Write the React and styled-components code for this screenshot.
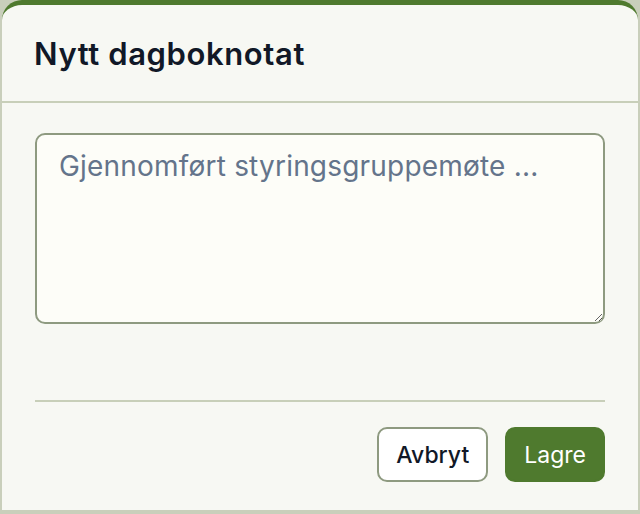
import React from "react";
import styled, { createGlobalStyle } from "styled-components";

const GlobalStyle = createGlobalStyle`
  html, body {
    margin: 0;
    padding: 0;
    background: #c9cfbb;
    font-family: Inter, "Noto Sans", sans-serif;
  }
`;

const Dialog = styled.div`
  box-sizing: border-box;
  width: 636px;
  height: 510px;
  margin-left: 2px;
  background: #f7f8f3;
  border-top: 5px solid #4f7a2e;
  border-radius: 20px 20px 0 0;
  display: flex;
  flex-direction: column;
  overflow: hidden;
`;

const Header = styled.div`
  height: 98px;
  box-sizing: border-box;
  padding: 0 32px 0;
  display: flex;
  align-items: center;
  border-bottom: 2px solid #c8cfb9;
`;

const Title = styled.h2`
  margin: 0;
  font-size: 31px;
  font-weight: 600;
  color: #111827;
  letter-spacing: 0.6px;
`;

const Body = styled.div`
  padding: 30px 33px 0;
  display: flex;
  flex-direction: column;
`;

const Note = styled.textarea`
  box-sizing: border-box;
  width: 100%;
  height: 191px;
  border: 2px solid #8e9a80;
  border-radius: 10px;
  background: #fdfdf8;
  padding: 10px 22px;
  font-family: inherit;
  font-size: 28px;
  line-height: 1.5;
  letter-spacing: 0.2px;
  color: #111827;
  resize: vertical;
  outline: none;

  &::placeholder {
    color: #64748b;
  }
`;

const Footer = styled.div`
  margin: 76px 33px 0;
  padding-top: 25px;
  border-top: 2px solid #c8cfb9;
  display: flex;
  justify-content: flex-end;
  gap: 17px;
`;

const Button = styled.button`
  box-sizing: border-box;
  height: 55px;
  padding: 0 17px;
  border-radius: 10px;
  border: 2px solid ${(p) => (p.$primary ? "#4f7a2e" : "#8e9a80")};
  background: ${(p) => (p.$primary ? "#4f7a2e" : "#ffffff")};
  color: ${(p) => (p.$primary ? "#ffffff" : "#111827")};
  font-family: inherit;
  font-size: 23px;
  font-weight: ${(p) => (p.$primary ? 400 : 500)};
  cursor: pointer;
`;

export default function App() {
  return (
    <>
      <GlobalStyle />
      <Dialog>
        <Header>
          <Title>Nytt dagboknotat</Title>
        </Header>
        <Body>
          <Note placeholder="Gjennomført styringsgruppemøte ..." />
        </Body>
        <Footer>
          <Button>Avbryt</Button>
          <Button $primary>Lagre</Button>
        </Footer>
      </Dialog>
    </>
  );
}
